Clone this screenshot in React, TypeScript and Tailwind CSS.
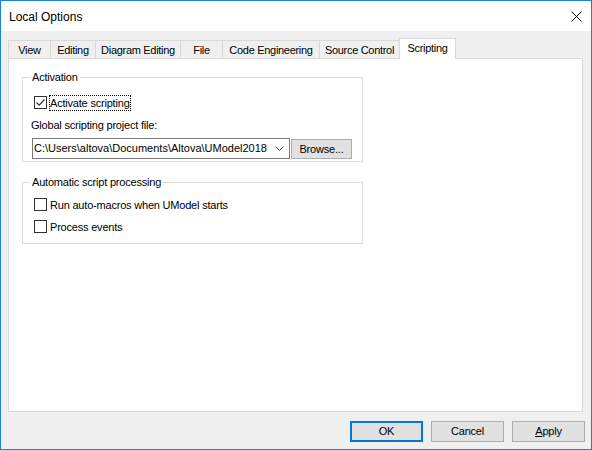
import React from "react";

const font = { fontFamily: '"Liberation Sans", Arial, sans-serif' };

function Check({ checked }: { checked?: boolean }) {
  return (
    <div className="w-[13px] h-[13px] border border-[#333333] bg-white flex items-center justify-center shrink-0">
      {checked && (
        <svg width="11" height="11" viewBox="0 0 11 11">
          <path d="M1.5 5.5 L4.2 8.2 L9.5 2.5" fill="none" stroke="#333333" strokeWidth="1.2" />
        </svg>
      )}
    </div>
  );
}

const tabs = [
  { label: "View", w: "w-[42px]" },
  { label: "Editing", w: "w-[45px]" },
  { label: "Diagram Editing", w: "w-[85px]" },
  { label: "File", w: "w-[42px]" },
  { label: "Code Engineering", w: "w-[97px]" },
  { label: "Source Control", w: "w-[80px]" },
];

export default function App() {
  return (
    <div
      className="w-[592px] h-[450px] border border-[#1883d7] bg-[#f0f0f0] flex flex-col text-[11px] tracking-[-0.2px] text-black overflow-hidden whitespace-nowrap"
      style={font}
    >
      {/* Title bar */}
      <div className="h-[30px] bg-white flex items-center justify-between pl-[8px] pr-[9px] shrink-0">
        <span className="text-[12px] tracking-normal leading-none pt-[1px]">Local Options</span>
        <svg width="11" height="11" viewBox="0 0 11 11">
          <path d="M0.5 0.5 L10.5 10.5 M10.5 0.5 L0.5 10.5" stroke="#000" strokeWidth="1" />
        </svg>
      </div>

      {/* Body */}
      <div className="flex-1 flex flex-col pl-[7px] pr-[8px] pt-[7px]">
        {/* Tabs */}
        <div className="flex items-end h-[20px] relative z-10 tracking-[-0.3px]">
          {tabs.map((t) => (
            <div
              key={t.label}
              className={`${t.w} h-[18px] border-l border-t border-[#d9d9d9] bg-[#f0f0f0] flex items-center justify-center leading-none pt-[1px]`}
            >
              {t.label}
            </div>
          ))}
          <div className="w-[57px] h-[21px] -mb-px border-l border-t border-r border-[#d9d9d9] bg-white flex items-start justify-center leading-none pt-[4px]">
            Scripting
          </div>
        </div>

        {/* Panel */}
        <div className="h-[354px] border border-[#d9d9d9] bg-white pl-[13px] pt-[18px]">
          {/* Group Activation */}
          <div className="relative w-[341px] h-[85px] border border-[#dcdcdc] pl-[11px] pt-[18px]">
            <span className="absolute left-[7px] -top-[8px] bg-white px-[2px] leading-[14px]">Activation</span>
            <div className="flex items-center h-[13px]">
              <Check checked />
              <span className="ml-[2px] px-px leading-[14px] outline outline-1 outline-dotted outline-[#000] -outline-offset-1 h-[16px] flex items-center">
                Activate scripting
              </span>
            </div>
            <div className="mt-[9px] -ml-[3px] leading-[14px]">Global scripting project file:</div>
            <div className="flex items-start -ml-[2px] mt-[6px]">
              <div className="w-[258px] h-[21px] border border-[#7a7a7a] bg-white flex items-center pl-[1px] pr-[4px] overflow-hidden">
                <span className="flex-1 whitespace-nowrap overflow-hidden leading-none tracking-normal">
                  C:\Users\altova\Documents\Altova\UModel2018
                </span>
                <svg width="9" height="6" viewBox="0 0 9 6" className="ml-[6px] mr-[1px] shrink-0">
                  <path d="M0.5 0.5 L4.5 4.5 L8.5 0.5" fill="none" stroke="#444" strokeWidth="1" />
                </svg>
              </div>
              <div className="ml-[1px] mt-px w-[61px] h-[20px] border border-[#adadad] bg-[#e1e1e1] flex items-center justify-center leading-none">
                Browse...
              </div>
            </div>
          </div>

          {/* Group Automatic */}
          <div className="relative mt-[20px] w-[341px] h-[62px] border border-[#dcdcdc] pl-[11px] pt-[15px]">
            <span className="absolute left-[7px] -top-[8px] bg-white px-[2px] leading-[14px]">
              Automatic script processing
            </span>
            <div className="flex items-center h-[13px]">
              <Check />
              <span className="ml-[3px] leading-[14px]">Run auto-macros when UModel starts</span>
            </div>
            <div className="flex items-center h-[13px] mt-[9px]">
              <Check />
              <span className="ml-[3px] leading-[14px]">Process events</span>
            </div>
          </div>
        </div>

        {/* Buttons */}
        <div className="flex justify-end gap-[8px] mt-[9px] -mr-[2px]">
          <div className="w-[73px] h-[21px] border-2 border-[#0078d7] bg-[#e1e1e1] flex items-center justify-center leading-none">
            OK
          </div>
          <div className="w-[73px] h-[21px] border border-[#adadad] bg-[#e1e1e1] flex items-center justify-center leading-none">
            Cancel
          </div>
          <div className="w-[73px] h-[21px] border border-[#adadad] bg-[#e1e1e1] flex items-center justify-center leading-none">
            <span>
              <span className="underline">A</span>pply
            </span>
          </div>
        </div>
      </div>
    </div>
  );
}
